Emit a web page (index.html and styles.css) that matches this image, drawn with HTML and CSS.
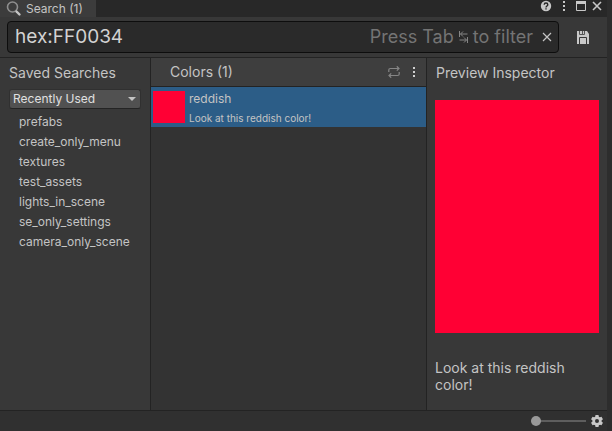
FILE: index.html
```html
<!DOCTYPE html>
<html lang="en">
<head>
<meta charset="utf-8">
<title>Search</title>
<link rel="stylesheet" href="styles.css">
</head>
<body>
<div class="window">
  <header class="tabbar">
    <div class="tab">
      <svg class="tab-icon" width="16" height="16" viewBox="0 0 16 16" fill="none"><circle cx="6.500" cy="6" r="5" stroke="#8f8f8f" stroke-width="1.600"/><path d="M10.500 10.500L13.500 13.500" stroke="#c4c4c4" stroke-width="2.400" stroke-linecap="round"/></svg>
      <span>Search (1)</span>
    </div>
    <div class="window-buttons">
      <button class="icon-button" aria-label="Help"><svg width="12" height="12" viewBox="0 0 12 12"><circle cx="6" cy="6" r="5.200" fill="#c8c8c8"/><path d="M4.200 4.700C4.200 2.500 7.800 2.500 7.800 4.700C7.800 6 6 6 6 7.400M6 8.300V9.600" stroke="#282828" stroke-width="1.400" fill="none"/></svg></button>
      <button class="icon-button" aria-label="Menu"><svg width="4" height="12" viewBox="0 0 4 12" fill="#c8c8c8"><path d="M1 1h2v2H1zM1 5h2v2H1zM1 9h2v2H1z"/></svg></button>
      <div class="window-state">
        <button class="icon-button" aria-label="Maximize"><svg width="10" height="10" viewBox="0 0 10 10"><path d="M.5 1.500H9.500V9.500H.5z" fill="none" stroke="#c8c8c8"/><path d="M0 0h10v3H0z" fill="#c8c8c8"/></svg></button>
        <button class="icon-button" aria-label="Close"><svg width="10" height="10" viewBox="0 0 10 10"><path d="M1 1L9 9M9 1L1 9" stroke="#c8c8c8" stroke-width="1.600"/></svg></button>
      </div>
    </div>
  </header>

  <div class="toolbar">
    <div class="search-box">
      <input class="search-input" type="text" value="hex:FF0034" aria-label="Search query" spellcheck="false">
      <span class="hint">Press Tab
        <svg width="9" height="12" viewBox="0 0 9 12" fill="none" stroke="#858585"><path d="M.5 0V6M8.500 3H1.500M4 .5L1.500 3L4 5.500M8.500 6V12M.5 9H7.500M5 6.500L7.500 9L5 11.500"/></svg>
        to filter</span>
      <button class="icon-button clear" aria-label="Clear"><svg width="10" height="10" viewBox="0 0 10 10"><path d="M1 1L9 9M9 1L1 9" stroke="#c4c4c4" stroke-width="1.200"/></svg></button>
    </div>
    <button class="icon-button" aria-label="Save search"><svg width="12" height="13" viewBox="0 0 12 13"><path d="M0 0H10L12 3V13H0z" fill="#c8c8c8"/><path d="M2.500 0V3.500H7.500V0M5.500 0V3" fill="none" stroke="#555"/><path d="M2.500 13V6.500H9.500V13" fill="none" stroke="#383838"/></svg></button>
  </div>

  <main class="panels">
    <aside class="saved">
      <h2 class="title">Saved Searches</h2>
      <div class="select-wrap">
        <select class="sort" aria-label="Sort saved searches"><option>Recently Used</option></select>
      </div>
      <ul class="saved-list">
        <li>prefabs</li>
        <li>create_only_menu</li>
        <li>textures</li>
        <li>test_assets</li>
        <li>lights_in_scene</li>
        <li>se_only_settings</li>
        <li>camera_only_scene</li>
      </ul>
    </aside>

    <section class="results">
      <div class="results-head">
        <h2 class="title">Colors (1)</h2>
        <button class="icon-button" aria-label="Refresh"><svg width="12" height="12" viewBox="0 0 12 12" fill="none" stroke="#858585" stroke-width="1.200"><path d="M.8 6V4Q.8 2.500 2.300 2.500H11M8.800 .3L11 2.500L8.800 4.700M11.200 6V8Q11.200 9.500 9.700 9.500H1M3.200 7.300L1 9.500L3.200 11.700"/></svg></button>
        <button class="icon-button" aria-label="Results menu"><svg width="4" height="12" viewBox="0 0 4 12" fill="#d0d0d0"><path d="M1 1h2v2H1zM1 5h2v2H1zM1 9h2v2H1z"/></svg></button>
      </div>
      <div class="result">
        <div class="swatch"></div>
        <div class="result-text">
          <div class="result-name">reddish</div>
          <div class="result-note">Look at this reddish color!</div>
        </div>
      </div>
    </section>

    <aside class="inspector">
      <h2 class="title">Preview Inspector</h2>
      <div class="preview"></div>
      <p class="description">Look at this reddish color!</p>
    </aside>
  </main>

  <footer class="statusbar">
    <input class="size" type="range" min="0" max="100" value="0" aria-label="Item size">
    <button class="icon-button" aria-label="Settings"><svg width="12" height="12" viewBox="-6 -6 12 12"><g fill="#c8c8c8"><circle r="4.500"/><path id="tooth" d="M-1.500 -6H1.500L2 -3H-2z"/><use href="#tooth" transform="rotate(60)"/><use href="#tooth" transform="rotate(120)"/><use href="#tooth" transform="rotate(180)"/><use href="#tooth" transform="rotate(240)"/><use href="#tooth" transform="rotate(300)"/></g><circle r="2" fill="#323232"/></svg></button>
  </footer>
</div>
</body>
</html>
```
FILE: styles.css
```css
* { box-sizing: border-box; }

body {
  margin: 0;
  background: #2d2d2d;
  color: #c4c4c4;
  font: 12px/16px Inter, "Liberation Sans", sans-serif;
}

.window {
  display: flex;
  flex-direction: column;
  min-height: 100vh;
  margin-right: 5px;
  background: #383838;
}

.icon-button {
  display: flex;
  padding: 0;
  border: 0;
  background: none;
}

.title {
  margin: 0;
  font-size: 14px;
  line-height: 18px;
  font-weight: 400;
}

.tabbar {
  display: flex;
  justify-content: space-between;
  height: 17px;
  background: #282828;
}

.tab {
  display: flex;
  align-items: center;
  gap: 4px;
  padding: 0 13px 0 6px;
  background: #3c3c3c;
}

.window-buttons {
  display: flex;
  align-items: center;
  gap: 10px;
  padding: 0 5px 5px 0;
}

.window-state {
  display: flex;
  gap: 6px;
}

.toolbar {
  display: flex;
  align-items: center;
  gap: 18px;
  height: 41px;
  padding: 0 18px 0 7px;
  border-bottom: 1px solid #232323;
}

.search-box {
  display: flex;
  flex: 1;
  align-items: center;
  height: 32px;
  padding: 0 6px 0 7px;
  border: 1px solid #0d0d0d;
  border-radius: 4px;
  background: #2a2a2a;
}

.search-input {
  flex: 1;
  min-width: 0;
  padding: 0;
  border: 0;
  outline: 0;
  background: none;
  color: #d2d2d2;
  font: 19px/24px Inter, "Liberation Sans", sans-serif;
}

.hint {
  color: #747474;
  font-size: 18px;
  line-height: 24px;
  white-space: nowrap;
}

.clear { margin-left: 9px; }

.panels {
  display: grid;
  flex: 1;
  grid-template-columns: 150px 1fr 180px;
}

.saved { padding: 6px 9px 8px; }

.select-wrap {
  position: relative;
  margin: 7px 0 3px;
}

.select-wrap::after {
  content: "";
  position: absolute;
  top: 8px;
  right: 5px;
  border: 4px solid transparent;
  border-top-color: #c4c4c4;
  border-bottom: 0;
  pointer-events: none;
}

.sort {
  display: block;
  width: 100%;
  height: 20px;
  padding: 0 3px;
  appearance: none;
  border: 1px solid #303030;
  border-bottom-color: #242424;
  border-radius: 3px;
  background: #515151;
  color: #e0e0e0;
  font: 12px/16px Inter, "Liberation Sans", sans-serif;
}

.saved-list {
  margin: 0;
  padding: 0 0 0 10px;
  list-style: none;
  line-height: 20px;
}

.results {
  border: solid #232323;
  border-width: 0 1px;
  background: #333333;
}

.results-head {
  display: flex;
  align-items: center;
  gap: 12px;
  height: 29px;
  padding: 0 10px 0 19px;
  border-bottom: 1px solid #232323;
  background: #3e3e3e;
}

.results-head .title { flex: 1; }

.result {
  display: flex;
  gap: 4px;
  height: 40px;
  padding: 4px 2px;
  background: #2c5d87;
}

.swatch {
  width: 32px;
  height: 32px;
  background: #ff0034;
}

.result-note {
  margin-top: 3px;
  font-size: 10px;
}

.inspector { padding: 6px 8px 8px; }

.inspector .title { padding-left: 1px; }

.preview {
  aspect-ratio: 164 / 233;
  margin-top: 18px;
  background: #ff0034;
}

.description {
  margin: 26px 0 0;
  font-size: 14px;
  line-height: 17px;
}

.statusbar {
  display: flex;
  align-items: center;
  justify-content: flex-end;
  gap: 5px;
  height: 21px;
  padding-right: 4px;
  border-top: 1px solid #232323;
  background: #303030;
}

.size {
  width: 55px;
  height: 10px;
  margin: 0;
  appearance: none;
  background: linear-gradient(#5e5e5e, #5e5e5e) center / 100% 2px no-repeat;
}

.size::-webkit-slider-thumb {
  width: 10px;
  height: 10px;
  appearance: none;
  border-radius: 50%;
  background: #999999;
}
```
